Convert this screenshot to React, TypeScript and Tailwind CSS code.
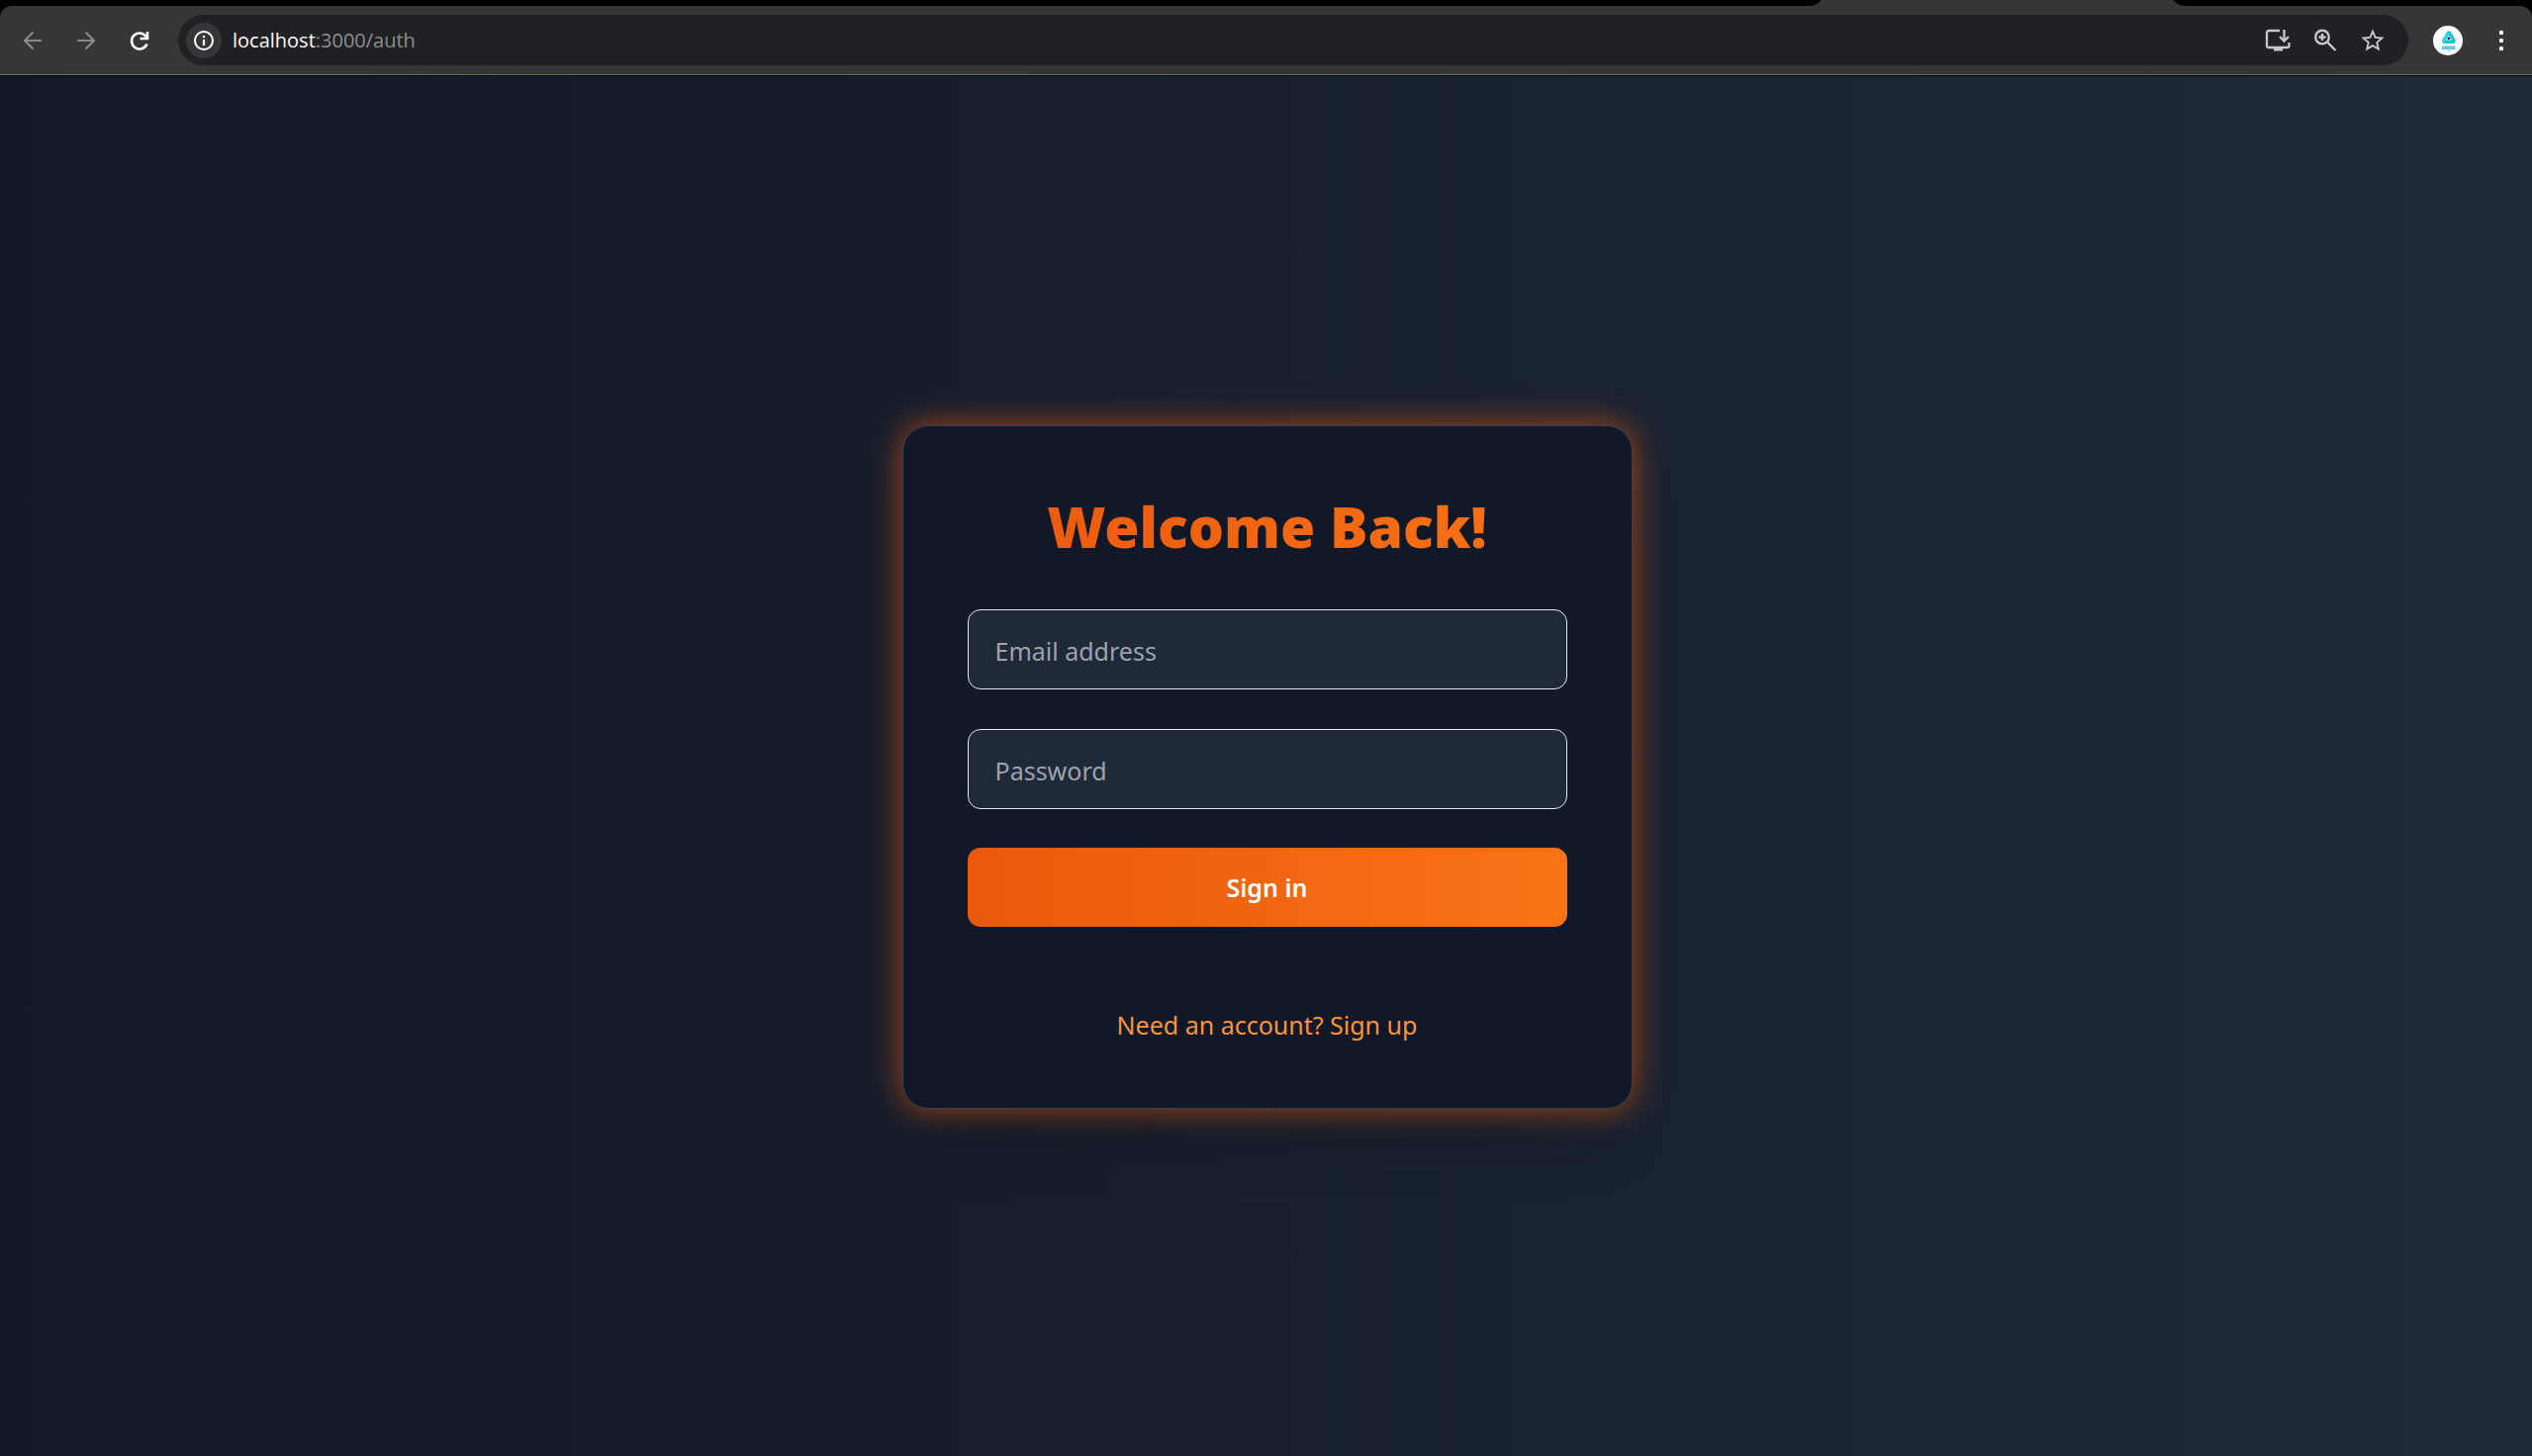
import React from "react";

const icon = "h-6 w-6 shrink-0";

function BrowserBar() {
  return (
    <header className="shrink-0 bg-black">
      <div className="flex h-[6px] justify-end pr-[350px]">
        <svg className="h-[6px] w-[380px]" viewBox="0 0 380 6" aria-hidden="true">
          <path d="M0 6C5 6 9 3 12 0H367C370 3 374 6 380 6Z" fill="#363636" />
        </svg>
      </div>
      <div className="flex h-[69px] items-center rounded-t-xl bg-[#363636] pr-[19px] pl-[21px]">
        <button type="button" aria-label="Back" className="mr-[30px] text-[#8a8a8a]">
          <svg className={icon} viewBox="0 0 24 24" fill="none" stroke="currentColor" strokeWidth="2.2" aria-hidden="true">
            <path d="M21 12H4.500M12.500 3.500L4 12l8.500 8.500" />
          </svg>
        </button>
        <button type="button" aria-label="Forward" className="mr-[30px] text-[#8a8a8a]">
          <svg className={icon} viewBox="0 0 24 24" fill="none" stroke="currentColor" strokeWidth="2.2" aria-hidden="true">
            <path d="M3 12h16.500M11.500 3.500L20 12l-8.500 8.500" />
          </svg>
        </button>
        <button type="button" aria-label="Reload" className="mr-[27px] text-white">
          <svg className={icon} viewBox="0 0 24 24" fill="none" stroke="currentColor" strokeWidth="2.6" aria-hidden="true">
            <path d="M19.300 9A8 8 0 1 0 19.500 15.500" />
            <path d="M20 3v7h-7.500" />
          </svg>
        </button>
        <div className="flex h-[51px] flex-1 items-center rounded-full bg-[#202124] pr-[22px] pl-2">
          <button type="button" aria-label="View site information" className="flex h-9 w-9 items-center justify-center rounded-full bg-[#363636] text-white">
            <svg className="h-6 w-6" viewBox="0 0 24 24" fill="none" stroke="currentColor" strokeWidth="2" aria-hidden="true">
              <circle cx="12" cy="12" r="9" />
              <path d="M12 11v6M12 7v2.200" strokeWidth="2.2" />
            </svg>
          </button>
          <p className="ml-[11px] flex-1 text-[20px] leading-7 text-[#8e8e8e]">
            <span className="text-white">localhost</span>:3000/auth
          </p>
          <div className="flex items-center gap-5 text-[#c7c7c7]">
            <button type="button" aria-label="Install app">
              <svg className="h-7 w-7" viewBox="0 0 28 28" fill="none" stroke="currentColor" strokeWidth="2.3" aria-hidden="true">
                <path d="M16 4H5a2 2 0 0 0-2 2v13a2 2 0 0 0 2 2h18.500a2 2 0 0 0 2-2v-3" />
                <path d="M20.500 3v11M16 10l4.500 4.500L25 10" />
                <path d="M10 21h9v3.500h-9z" fill="currentColor" stroke="none" />
              </svg>
            </button>
            <button type="button" aria-label="Zoom">
              <svg className="h-7 w-7" viewBox="0 0 28 28" fill="none" stroke="currentColor" strokeWidth="2.4" aria-hidden="true">
                <circle cx="11" cy="10.500" r="6.800" />
                <path d="M16 15.500l8.500 8.500M11 7v7M7.500 10.500h7" />
              </svg>
            </button>
            <button type="button" aria-label="Bookmark this tab">
              <svg className="h-7 w-7" viewBox="0 0 24 24" fill="currentColor" aria-hidden="true">
                <path d="M22 9.240l-7.190-.620L12 2 9.190 8.630 2 9.240l5.460 4.730L5.820 21 12 17.270 18.180 21l-1.630-7.030L22 9.240zM12 15.400l-3.760 2.270 1-4.280-3.320-2.880 4.380-.380L12 6.100l1.710 4.040 4.380.380-3.320 2.880 1 4.280L12 15.400z" />
              </svg>
            </button>
          </div>
        </div>
        <button type="button" aria-label="Profile" className="ml-[25px]">
          <svg className="h-[30px] w-[30px]" viewBox="0 0 30 30" aria-hidden="true">
            <circle cx="15" cy="15" r="15" fill="#fff" />
            <path d="M14.500 5.500h3l5.500 9.500-1.500 3h-11L9 15z" fill="#1fc4cf" />
            <path d="M14.500 5.500L9 15l1.500 3 5.500-9.500z" fill="#35d6dc" />
            <path d="M15.800 9.500l3 5h-6z" fill="#e6fafa" />
            <circle cx="15.800" cy="12.800" r="1.400" fill="#123" />
            <path d="M9 20.500h13.500v3.500H9z" fill="#5cc3da" />
            <path d="M10 22.200h11.500" stroke="#8fd9e6" strokeDasharray="2 1.500" />
            <path d="M14 25.500h4" stroke="#c4c4c4" />
          </svg>
        </button>
        <button type="button" aria-label="Menu" className="ml-[27px] text-white">
          <svg className={icon} viewBox="0 0 24 24" fill="currentColor" aria-hidden="true">
            <circle cx="12" cy="4" r="2.200" />
            <circle cx="12" cy="12" r="2.200" />
            <circle cx="12" cy="20" r="2.200" />
          </svg>
        </button>
      </div>
      <div className="h-px bg-[#6b6b68]" />
      <div className="h-px bg-black" />
    </header>
  );
}

const field =
  "block h-[81px] w-full rounded-[13px] border border-[#e5e7eb] bg-[#1f2937] px-[27px] pt-[2px] text-[25px] text-white placeholder:text-[#9ca3af] focus:outline-none";

function SignInCard() {
  return (
    <section className="w-full max-w-[738px] rounded-[26px] border border-[#334155] bg-[#111827] px-[65px] pt-[67px] pb-[64px] font-['Noto_Sans',sans-serif] shadow-[0_0_33px_rgba(234,88,12,0.7),0_41px_66px_-20px_rgba(0,0,0,0.25)]">
      <h1 className="bg-gradient-to-r from-[#ea580c] to-[#f97316] bg-clip-text text-center text-[57px] leading-[68px] font-black text-transparent">
        Welcome Back!
      </h1>
      <form className="mt-[50px]" onSubmit={(e) => e.preventDefault()}>
        <input type="email" aria-label="Email address" placeholder="Email address" className={field} />
        <input type="password" aria-label="Password" placeholder="Password" className={`mt-10 ${field}`} />
        <button type="submit" className="mt-[39px] h-20 w-full rounded-[13px] bg-gradient-to-r from-[#ea580c] to-[#f97316] pt-[2px] text-[25px] font-semibold text-white">
          Sign in
        </button>
      </form>
      <p className="mt-[79px] text-center text-[25px] leading-10">
        <a href="#signup" className="text-[#fb923c]">Need an account? Sign up</a>
      </p>
    </section>
  );
}

export default function App() {
  return (
    <div className="flex min-h-screen flex-col font-['Open_Sans','Noto_Sans',sans-serif]">
      <BrowserBar />
      <main className="flex flex-1 items-center justify-center bg-[linear-gradient(to_right,#111827,#1f2937)] pt-[2px] pr-4 pl-[18px]">
        <SignInCard />
      </main>
    </div>
  );
}
